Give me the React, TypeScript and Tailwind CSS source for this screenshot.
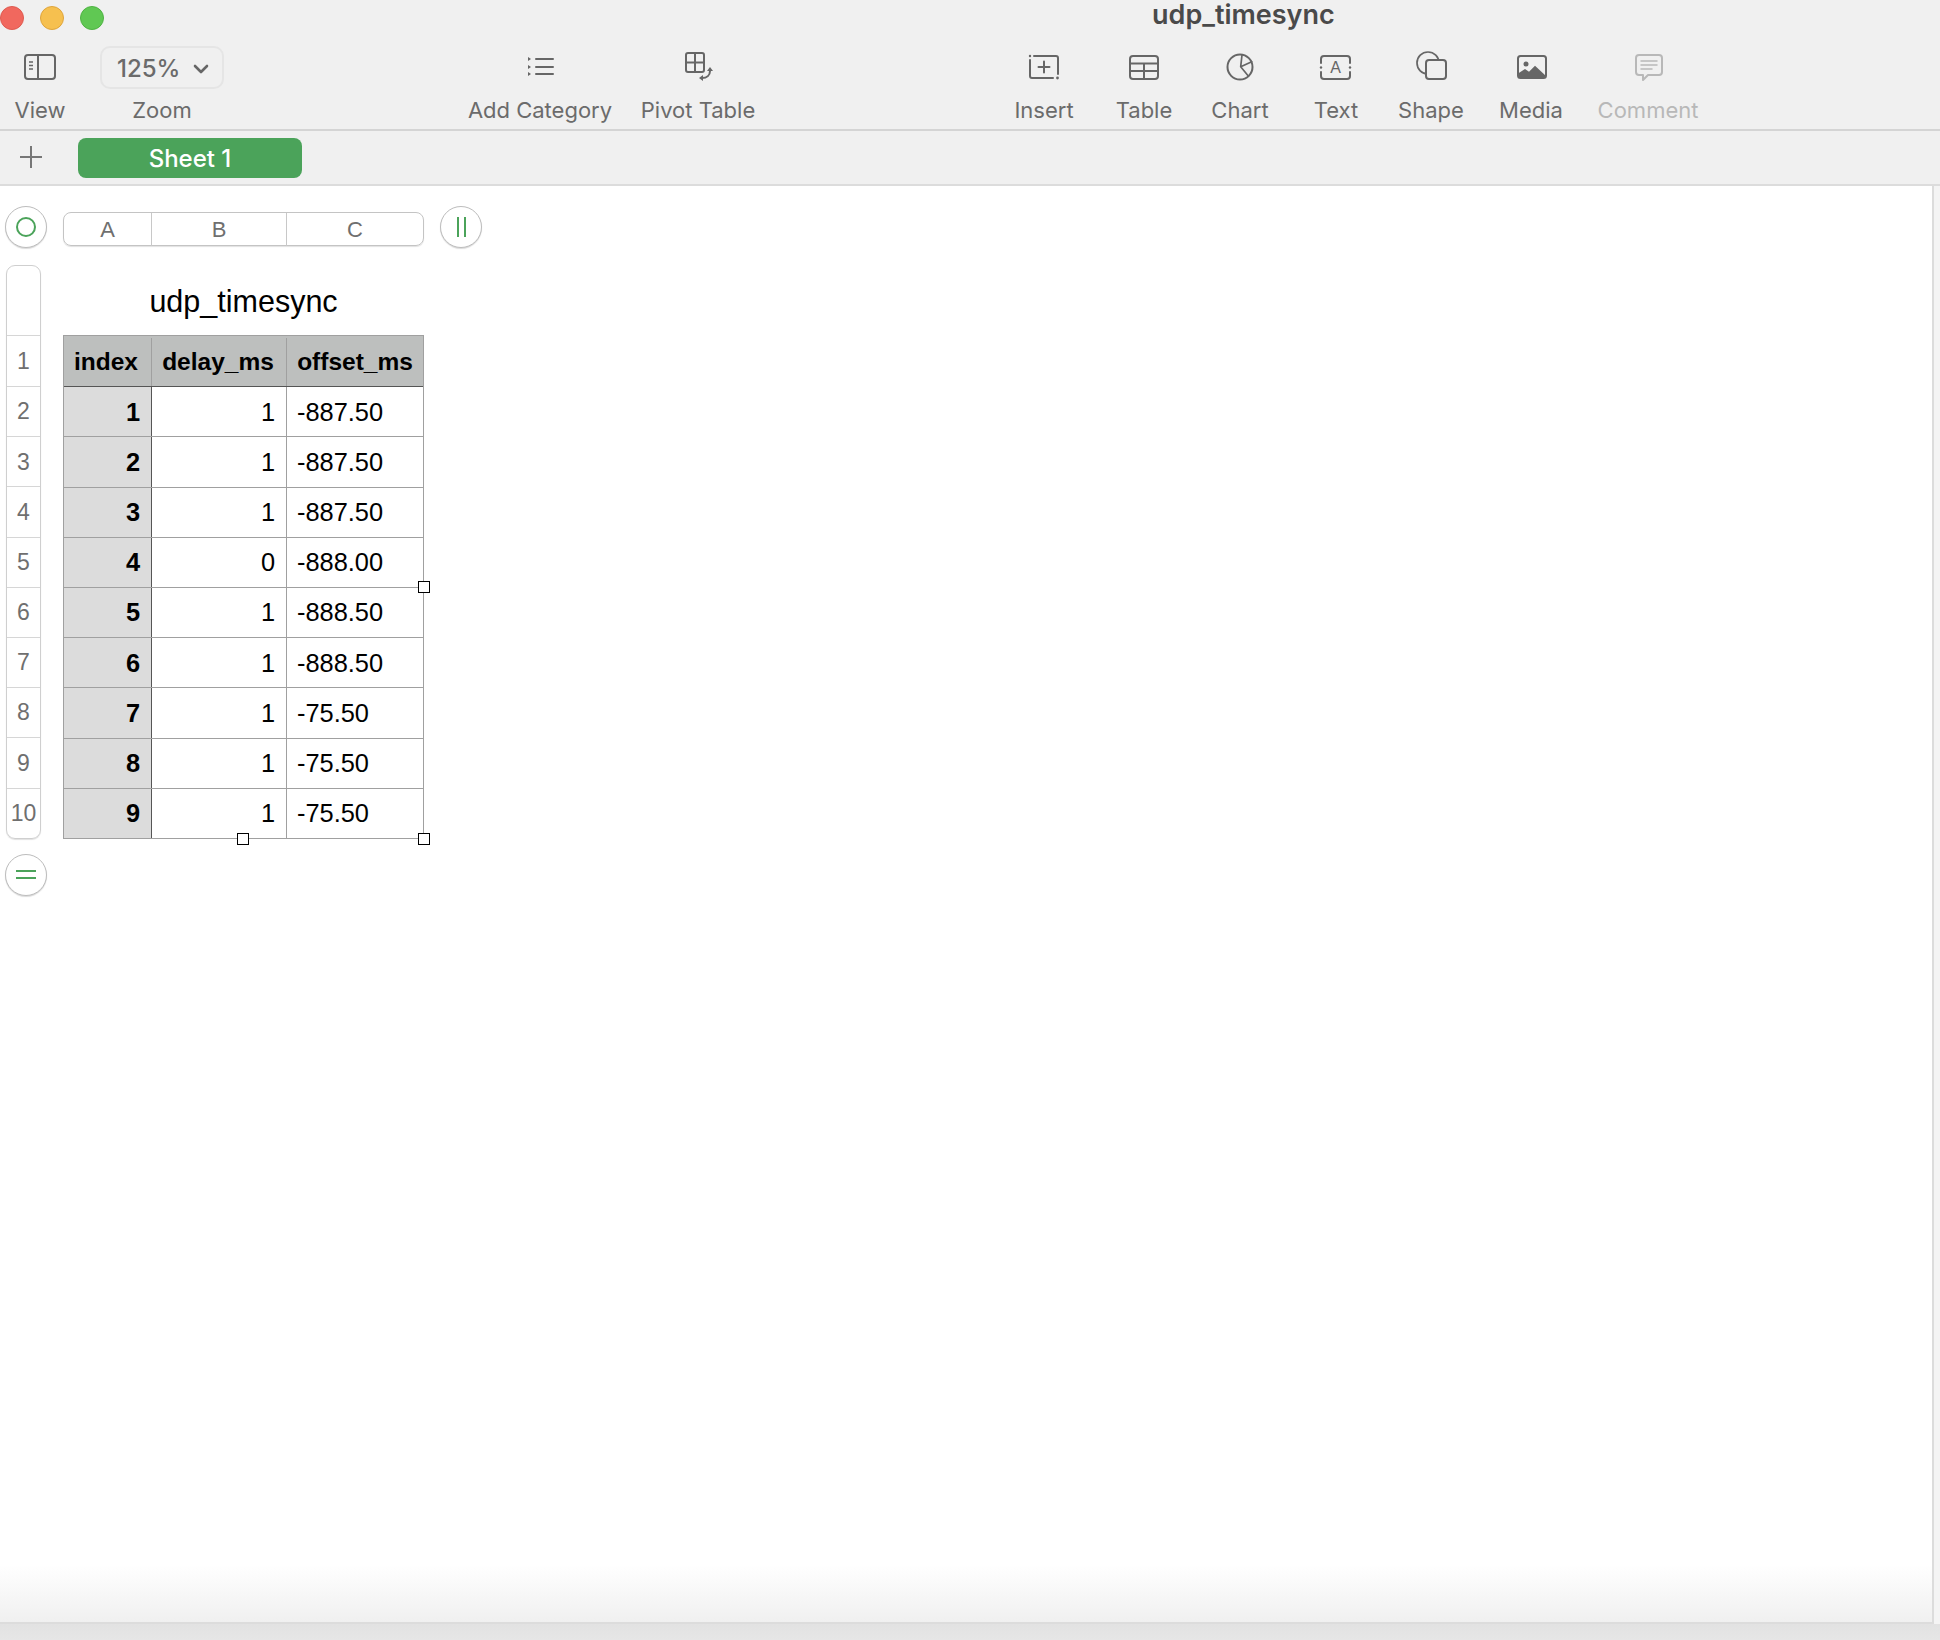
import React from "react";

const rows: [number, number, string][] = [
  [1, 1, "-887.50"],
  [2, 1, "-887.50"],
  [3, 1, "-887.50"],
  [4, 0, "-888.00"],
  [5, 1, "-888.50"],
  [6, 1, "-888.50"],
  [7, 1, "-75.50"],
  [8, 1, "-75.50"],
  [9, 1, "-75.50"],
];

const Icon: React.FC<{ children: React.ReactNode; muted?: boolean }> = ({ children, muted }) => (
  <svg
    width="40"
    height="40"
    viewBox="0 0 40 40"
    fill="none"
    stroke={muted ? "#b8b8b8" : "#666666"}
    strokeWidth="2"
    strokeLinecap="round"
    strokeLinejoin="round"
  >
    {children}
  </svg>
);

const ToolItem: React.FC<{
  label: string;
  className: string;
  muted?: boolean;
  children: React.ReactNode;
}> = ({ label, className, muted, children }) => (
  <div className={`flex flex-col items-center ${className}`}>
    <div className="flex h-[44px] items-center justify-center">{children}</div>
    <div className={`flex h-[43px] items-center whitespace-nowrap text-[22px] ${muted ? "text-[#b8b8b8]" : "text-[#6b6b6b]"}`}>
      {label}
    </div>
  </div>
);

const Toolbar = () => (
  <div className="flex h-[85px] items-start font-['Inter',sans-serif]">
    <ToolItem label="View" className="w-[80px]">
      <Icon>
        <rect x="5" y="8" width="30" height="24" rx="3" />
        <path d="M18 8V32" />
        <path d="M9 15H13M9 18.5H13M9 22H13" strokeWidth="1.5" strokeLinecap="butt" />
      </Icon>
    </ToolItem>
    <ToolItem label="Zoom" className="ml-[20px] w-[124px]">
      <div className="flex h-[43px] w-[124px] items-center gap-[13px] rounded-[10px] border-2 border-[#e5e5e5] pl-[15px] pt-[3px] text-[24px] font-medium text-[#6b6b6b]">
        <span>125%</span>
        <svg width="16" height="12" viewBox="0 0 16 12" fill="none" stroke="#666666" strokeWidth="2.6" strokeLinecap="round" strokeLinejoin="round">
          <path d="M2 3L8 9L14 3" />
        </svg>
      </div>
    </ToolItem>
    <ToolItem label="Add Category" className="ml-[241px] w-[150px]">
      <Icon>
        <path d="M8 10L11 12L8 14ZM8 18L11 20L8 22ZM8 25L11 27L8 29Z" fill="#666666" stroke="none" />
        <path d="M16 12H33M16 20H33M16 27H33" />
      </Icon>
    </ToolItem>
    <ToolItem label="Pivot Table" className="ml-[11px] w-[144px]">
      <Icon>
        <rect x="8" y="6" width="18" height="19" rx="2" />
        <path d="M17 6V25M8 15.5H26" />
        <path d="M24 31C29 31 32 28 32 24" />
        <path d="M25 28L21 31L25 34ZM29 24L32 20L35 24Z" fill="#666666" stroke="none" />
      </Icon>
    </ToolItem>
    <ToolItem label="Insert" className="ml-[244px] w-[60px]">
      <Icon>
        <path d="M6 13V29A2 2 0 0 0 8 31H29M10 9H32A2 2 0 0 1 34 11V27" />
        <path d="M20 14.5V25.5M14.5 20H25.5" />
        <circle cx="6" cy="9" r="1.2" fill="#666666" stroke="none" />
        <circle cx="33.5" cy="31" r="1.4" fill="#666666" stroke="none" />
      </Icon>
    </ToolItem>
    <ToolItem label="Table" className="ml-[40px] w-[60px]">
      <Icon>
        <rect x="6" y="9" width="28" height="23" rx="3" />
        <path d="M6 16.5H34M6 24H34M20 16.5V32" />
      </Icon>
    </ToolItem>
    <ToolItem label="Chart" className="ml-[36px] w-[60px]">
      <Icon>
        <circle cx="20" cy="20" r="12.5" />
        <path d="M22 8L20.7 19.7L28.3 29M20.7 19.7L31.7 14.7" strokeWidth="1.7" />
      </Icon>
    </ToolItem>
    <ToolItem label="Text" className="ml-[36px] w-[60px]">
      <Icon>
        <path d="M5 16V12A3 3 0 0 1 8 9H31A3 3 0 0 1 34 12V16M5 25V29A3 3 0 0 0 8 32H31A3 3 0 0 0 34 29V25" />
        <circle cx="5" cy="20.5" r="1.2" fill="#666666" stroke="none" />
        <circle cx="34" cy="20.5" r="1.2" fill="#666666" stroke="none" />
        <text x="19.5" y="26" textAnchor="middle" fontSize="16" fontFamily="'Liberation Sans', sans-serif" fill="#666666" stroke="none">
          A
        </text>
      </Icon>
    </ToolItem>
    <ToolItem label="Shape" className="ml-[35px] w-[60px]">
      <Icon>
        <circle cx="17" cy="16" r="11" strokeWidth="1.7" />
        <rect x="15" y="13" width="20" height="19" rx="3" fill="#f0f0f0" />
      </Icon>
    </ToolItem>
    <ToolItem label="Media" className="ml-[40px] w-[60px]">
      <Icon>
        <rect x="7" y="9" width="28" height="22" rx="2.5" />
        <circle cx="15" cy="17" r="2.5" fill="#666666" stroke="none" />
        <path d="M7 26.5L14 22L18 24.7L24 18.7L35 29V31H7Z" fill="#666666" stroke="none" />
      </Icon>
    </ToolItem>
    <ToolItem label="Comment" className="ml-[57px] w-[60px]" muted>
      <Icon muted>
        <path d="M11 8H31A3 3 0 0 1 34 11V25A3 3 0 0 1 31 28H20L15 33V28H11A3 3 0 0 1 8 25V11A3 3 0 0 1 11 8Z" />
        <path d="M13 14H29M13 18H29M13 22H24" strokeWidth="1.5" />
      </Icon>
    </ToolItem>
  </div>
);

const CircleButton: React.FC<{ children: React.ReactNode }> = ({ children }) => (
  <div className="flex h-[42px] w-[42px] shrink-0 items-center justify-center rounded-full border border-[#bdbdbd] bg-white shadow-[0_1px_1px_rgba(0,0,0,0.15)]">
    {children}
  </div>
);

const Sheet = () => (
  <div className="flex flex-col pl-[5px] pt-[20px] font-['Liberation_Sans',sans-serif]">
    <div className="flex items-start">
      <CircleButton>
        <div className="h-[20px] w-[20px] rounded-full border-2 border-[#4ba35a]" />
      </CircleButton>
      <div className="ml-[16px] mt-[6px] grid h-[34px] w-[361px] grid-cols-[88px_135px_138px] rounded-[8px] border border-[#c4c4c4] pb-[1px] text-[22px] text-[#6f6f6f] shadow-[0_1px_1px_rgba(0,0,0,0.12)]">
        <div className="flex items-center justify-center border-r border-[#c8c8c8]">A</div>
        <div className="flex items-center justify-center border-r border-[#c8c8c8]">B</div>
        <div className="flex items-center justify-center pr-[2px]">C</div>
      </div>
      <div className="ml-[16px]">
        <CircleButton>
          <div className="flex gap-[5px]">
            <div className="h-[20px] w-[2px] bg-[#4ba35a]" />
            <div className="h-[20px] w-[2px] bg-[#4ba35a]" />
          </div>
        </CircleButton>
      </div>
    </div>

    <div className="mt-[17px] flex items-start">
      <div className="ml-[1px] flex w-[35px] flex-col rounded-[9px] border border-[#cfcfcf] text-[23px] text-[#6f6f6f] shadow-[0_1px_1px_rgba(0,0,0,0.12)]">
        <div className="h-[69px]" />
        <div className="flex h-[51px] items-center justify-center border-t border-[#d6d6d6]">1</div>
        {rows.map((row) => (
          <div key={row[0]} className="flex h-[50.2px] items-center justify-center border-t border-[#d6d6d6]">
            {row[0] + 1}
          </div>
        ))}
      </div>

      <div className="relative ml-[22px] w-[361px]">
        <div className="flex h-[70px] items-center justify-center pt-[4px] text-[30.5px] text-black">udp_timesync</div>
        <div className="border border-[#a0a0a0] text-black">
          <div className="grid h-[51px] grid-cols-[88px_135px_136px] border-b border-[#555555] bg-[#bdbfbe] pt-[2px] text-[24.5px] font-bold">
            <div className="flex items-center justify-center border-r border-[#a0a0a0] pr-[3px]">index</div>
            <div className="flex items-center justify-center border-r border-[#a0a0a0] pr-[2px]">delay_ms</div>
            <div className="flex items-center justify-center">offset_ms</div>
          </div>
          {rows.map(([index, delay, offset], i) => (
            <div key={index} className={`grid grid-cols-[88px_135px_136px] text-[25.4px] ${i > 0 ? "h-[50.2px] border-t border-[#a0a0a0]" : "h-[49.4px]"}`}>
              <div className="flex items-center justify-end border-r border-[#555555] bg-[#dcdcdc] pr-[11px] font-bold">{index}</div>
              <div className="flex items-center justify-end border-r border-[#a0a0a0] pr-[11px]">{delay}</div>
              <div className="flex items-center pl-[10px]">{offset}</div>
            </div>
          ))}
        </div>
        <div className="absolute left-[355px] top-[316px] h-[12px] w-[12px] border border-black bg-white" />
        <div className="absolute left-[174px] top-[568px] h-[12px] w-[12px] border border-black bg-white" />
        <div className="absolute left-[355px] top-[568px] h-[12px] w-[12px] border border-black bg-white" />
      </div>
    </div>

    <div className="mt-[15px]">
      <CircleButton>
        <div className="flex w-[20px] flex-col gap-[5px]">
          <div className="h-[2px] bg-[#4ba35a]" />
          <div className="h-[2px] bg-[#4ba35a]" />
        </div>
      </CircleButton>
    </div>
  </div>
);

export default function App() {
  return (
    <div className="flex h-[1640px] w-[1940px] flex-col overflow-hidden bg-white">
      <header className="h-[131px] shrink-0 border-b-2 border-[#d4d4d4] bg-[#f0f0f0]">
        <div className="flex h-[45px] items-start">
          <div className="mt-[6px] flex gap-[16px]">
            <div className="h-[24px] w-[24px] rounded-full border border-[#df5b50] bg-[#f1685e]" />
            <div className="h-[24px] w-[24px] rounded-full border border-[#dfa53c] bg-[#f6c04f]" />
            <div className="h-[24px] w-[24px] rounded-full border border-[#4fb343] bg-[#60c853]" />
          </div>
          <div className="ml-[1048px] font-['Inter',sans-serif] text-[27px] font-semibold leading-[30px] text-[#4a4a4a]">udp_timesync</div>
        </div>
        <Toolbar />
      </header>

      <div className="flex h-[55px] shrink-0 items-center border-b-2 border-[#dcdcdc] bg-[#f0f0f0]">
        <svg className="mb-[2px] ml-[20px]" width="22" height="22" viewBox="0 0 22 22" fill="none" stroke="#777777" strokeWidth="2">
          <path d="M11 0V22M0 11H22" />
        </svg>
        <div className="ml-[36px] flex h-[40px] w-[224px] items-center justify-center rounded-[8px] bg-[#4ba35a] pt-[2px] font-['Inter',sans-serif] text-[24px] font-medium text-white">
          Sheet 1
        </div>
      </div>

      <div className="flex min-h-0 flex-1">
        <main className="w-[1934px] border-b-2 border-r-2 border-[#dcdcdc] bg-gradient-to-b from-white from-[96%] to-[#f0f0f0]">
          <Sheet />
        </main>
        <div className="flex-1 bg-[#f4f4f4]" />
      </div>
      <div className="h-[16px] shrink-0 bg-gradient-to-b from-[#e2e2e2] to-[#e6e6e6]" />
    </div>
  );
}
